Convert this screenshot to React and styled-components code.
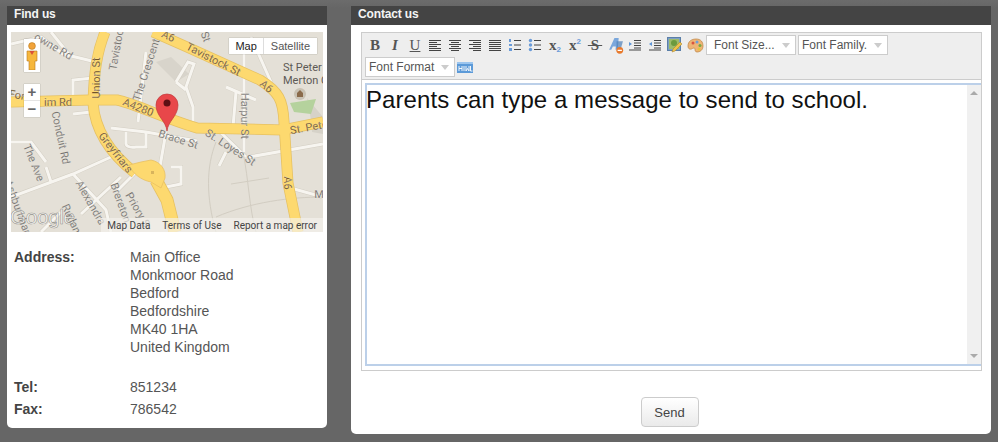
import React from 'react';
import styled, { createGlobalStyle } from 'styled-components';

const GlobalStyle = createGlobalStyle`
  html, body {
    margin: 0;
    padding: 0;
    background: #666;
    font-family: "Liberation Sans", Arial, sans-serif;
    color: #444;
  }
`;

const Page = styled.div`
  width: 998px;
  height: 442px;
  box-sizing: border-box;
  padding: 6px 7px 0;
  display: flex;
  gap: 24px;
  align-items: flex-start;
  overflow: hidden;
  background: linear-gradient(#6c6c6c, #666 8px);
`;

const Panel = styled.section`
  width: ${props => props.$width}px;
  height: ${props => props.$height}px;
  background: #fff;
  border-radius: 0 0 5px 5px;
  flex: none;
`;

const PanelTitle = styled.h2`
  margin: 0;
  height: 19px;
  padding-left: ${props => props.$indent}px;
  background: #444;
  color: #f4f4f4;
  font-size: 12px;
  line-height: 17px;
  font-weight: bold;
  letter-spacing: -0.15px;
`;

const FindBody = styled.div`
  padding: 7px 4px 0;
`;

const MapBox = styled.div`
  position: relative;
  width: 312px;
  height: 200px;
  overflow: hidden;
`;

const MapTypes = styled.div`
  position: absolute;
  top: 6px;
  right: 6px;
  display: flex;
  height: 16px;
  background: #fff;
  box-shadow: 0 0 1px rgba(0, 0, 0, 0.4);
  font-size: 11px;
  line-height: 16px;
`;

const MapType = styled.span`
  padding: 0 ${props => props.$active ? '6px' : '7px'};
  color: ${props => props.$active ? '#222' : '#555'};
  border-left: ${props => props.$active ? 'none' : '1px solid #ddd'};
`;

const Pegman = styled.div`
  position: absolute;
  left: 13px;
  top: 7px;
  width: 16px;
  height: 33px;
  background: #fff;
  box-shadow: 0 0 1px rgba(0, 0, 0, 0.4);
  display: flex;
  align-items: center;
  justify-content: center;
`;

const Zoom = styled.div`
  position: absolute;
  left: 13px;
  top: 52px;
  width: 16px;
  height: 33px;
  background: #fff;
  box-shadow: 0 0 1px rgba(0, 0, 0, 0.4);
  display: flex;
  flex-direction: column;
  color: #666;
  font-size: 15px;
  line-height: 16px;
  text-align: center;
  font-weight: bold;
`;

const ZoomStep = styled.span`
  height: 16px;
  & + & {
    border-top: 1px solid #e4e4e4;
  }
`;

const MapFooter = styled.div`
  position: absolute;
  right: 0;
  bottom: 0;
  height: 14px;
  padding: 0 6px 0 6px;
  display: flex;
  gap: 12px;
  background: rgba(245, 243, 238, 0.65);
  color: #444;
  font-family: Roboto, "Liberation Sans", sans-serif;
  font-size: 10px;
  line-height: 16px;
  white-space: nowrap;
`;

const Details = styled.div`
  margin-top: 16px;
  padding-left: 3px;
  font-size: 14px;
  line-height: 18px;
`;

const DetailRow = styled.div`
  display: flex;
  margin-bottom: ${props => props.$gap || 0}px;
`;

const DetailLabel = styled.div`
  width: 116px;
  font-weight: bold;
  font-size: 14px;
`;

const DetailValue = styled.div`
  white-space: pre-line;
  color: #555;
`;

const ContactBody = styled.div`
  padding: 7px 9px 0 10px;
`;

const Toolbar = styled.div`
  box-sizing: border-box;
  height: 48px;
  padding: 1px 3px 0;
  background: #eee;
  border: 1px solid #ccc;
`;

const ToolRow = styled.div`
  display: flex;
  align-items: center;
  height: 22px;
`;

const ToolButton = styled.span`
  width: 20px;
  height: 20px;
  flex: none;
  display: flex;
  align-items: center;
  justify-content: center;
  font-family: "Liberation Serif", serif;
  font-weight: bold;
  color: #555;
  font-size: 15px;
`;

const Italic = styled.span`
  font-style: italic;
`;

const Underlined = styled.span`
  font-weight: normal;
  text-decoration: underline;
`;

const Struck = styled.span`
  text-decoration: line-through;
`;

const Sub = styled.span`
  font-size: 8px;
  color: #6a9bd8;
  font-family: "Liberation Sans", sans-serif;
  position: relative;
  top: ${props => props.$up ? '-4px' : '4px'};
`;

const SelectBox = styled.div`
  box-sizing: border-box;
  width: ${props => props.$width}px;
  height: 20px;
  margin-left: ${props => props.$ml || 0}px;
  padding-left: ${props => props.$pad}px;
  display: flex;
  align-items: center;
  justify-content: space-between;
  background: #fff;
  border: 1px solid #ccc;
  color: #555;
  font-size: 12px;
  flex: none;
`;

const SelectArrow = styled.i`
  width: 0;
  height: 0;
  margin-right: 5px;
  border-left: 4px solid transparent;
  border-right: 4px solid transparent;
  border-top: 5px solid #ccc;
`;

const EditorFrame = styled.div`
  box-sizing: border-box;
  height: 291px;
  padding: 3px 0 4px 3px;
  border: 1px solid #ccc;
  border-top: none;
  background: #fff;
`;

const Editor = styled.div`
  box-sizing: border-box;
  height: 100%;
  display: flex;
  border: 2px solid #bcd0e9;
  border-right: none;
`;

const EditorText = styled.div`
  flex: 1;
  color: #111;
  font-size: 24px;
  line-height: 30px;
  letter-spacing: 0.07px;
  margin-left: -1px;
`;

const ScrollBar = styled.div`
  width: 14px;
  background: #f0f0f0;
  display: flex;
  flex-direction: column;
  justify-content: space-between;
  align-items: center;
  padding: 6px 0;
`;

const ScrollArrow = styled.i`
  width: 0;
  height: 0;
  border-left: 4px solid transparent;
  border-right: 4px solid transparent;
  ${props => props.$up ? 'border-bottom: 4px solid #aaa;' : 'border-top: 4px solid #aaa;'}
`;

const Actions = styled.div`
  display: flex;
  justify-content: center;
  margin-top: 26px;
`;

const SendButton = styled.button`
  box-sizing: border-box;
  width: 58px;
  height: 30px;
  margin-left: -4px;
  border: 1px solid #ccc;
  border-radius: 4px;
  background: linear-gradient(#fff, #eaeaea);
  color: #444;
  font-family: inherit;
  font-size: 13px;
`;

const minorRoads = [
  'M0 12 L30 5 L52 22 L85 30',
  'M62 65 L62 48 L82 46',
  'M62 82 L80 80',
  'M100 96 L135 100 L186 109',
  'M115 100 L115 112 Q116 116 125 115 L135 115 L135 100',
  'M135 20 L127 90',
  'M165 50 L177 30 L183 32 L175 55 L182 75 L182 96',
  'M155 100 L148 140',
  'M165 50 L175 58',
  'M215 55 L245 68',
  'M225 60 L222 95',
  'M233 15 L233 120',
  'M206 97 L235 125',
  'M215 120 L208 134',
  'M238 125 L312 112',
  'M276 155 L312 165',
  'M160 135 L170 135 L170 152 L155 155',
  'M0 165 L62 142 L100 125',
  'M35 135 L40 150',
  'M62 142 L95 178 L100 200',
  'M110 145 L70 182',
  'M50 180 L30 200',
  'M0 110 L20 110 L35 130',
  'M125 140 L105 160',
  'M240 5 L260 50',
  'M40 0 L60 25',
];

const thinPaths = [
  'M205 110 C195 135 195 165 205 200',
  'M232 120 C238 150 238 175 245 200',
  'M205 185 C240 170 280 165 312 165',
  'M220 152 L258 146',
];

const labels = [
  ['owne Rd', 42, 15, 30],
  ['Union St', 86, 46, -90],
  ['Tavistoc', 106, 18, -80],
  ['The Crescent', 136, 38, -72],
  ['A6', 157, 5, 25],
  ['Tavistock St', 202, 28, 27],
  ['A6', 255, 55, 40],
  ['A4280', 127, 76, 22],
  ['Harpur St', 233, 84, 90],
  ['St. Pete', 298, 96, -10],
  ['Brace St', 167, 108, 17],
  ['St. Loyes St', 219, 116, 33],
  ['Greyfriars', 104, 121, 52],
  ['Conduit Rd', 49, 106, 78],
  ['The Ave', 22, 131, 68],
  ['A6', 276, 151, 90],
  ['Alexandra', 79, 171, 60],
  ['Brereton', 109, 171, 70],
  ['Priory S', 126, 178, 60],
  ['Ashburnham', 7, 178, 70],
  ['Rutland', 61, 190, 65],
  ['Fon', 7, 64, 10],
  ['im Rd', 47, 71, 0],
  ['M', 308, 163, 0],
  ['St', 194, 5, 70],
];

const MapDrawing = () => (
  <svg width="312" height="200" viewBox="0 0 312 200">
    <rect width="312" height="200" fill="#e4e0d7" />
    <path d="M145 30 L160 25 L178 42 L165 50Z" fill="#d8d4cb" />
    <path d="M296 66 L300 88 L301 100 L312 102 L312 85Z" fill="#d6d2c8" />
    <path d="M279 71 L305 67 L300 82 L283 80Z" fill="#b5d29d" />
    <g fill="none" stroke="#d3cec3" strokeWidth="4">
      {minorRoads.map((d, i) => <path key={i} d={d} />)}
    </g>
    <g fill="none" stroke="#f7f5f0" strokeWidth="3">
      {minorRoads.map((d, i) => <path key={i} d={d} />)}
    </g>
    <g fill="none" stroke="#d2cdc2" strokeWidth="1">
      {thinPaths.map((d, i) => <path key={i} d={d} />)}
    </g>
    <g fill="none" stroke="#e6c162" strokeWidth="11">
      <path d="M0 70 L79 68 L106 68 C125 72 150 85 186 96 L272 98 L312 90" />
      <path d="M94 0 C86 20 83 40 82 71 C84 100 100 122 124 141" />
      <path d="M142 0 L176 15 L249 48 C268 60 272 68 273 90 L277 151 L287 200" />
      <path d="M145 148 L156 168 L164 200" strokeWidth="13" />
    </g>
    <g fill="none" stroke="#fdd96f" strokeWidth="9.5">
      <path d="M0 70 L79 68 L106 68 C125 72 150 85 186 96 L272 98 L312 90" />
      <path d="M94 0 C86 20 83 40 82 71 C84 100 100 122 124 141" />
      <path d="M142 0 L176 15 L249 48 C268 60 272 68 273 90 L277 151 L287 200" />
      <path d="M145 148 L156 168 L164 200" strokeWidth="11.5" />
    </g>
    <path d="M118 133 L130 130 L140 128 C150 130 155 138 154 146 L150 156 L140 150 C130 148 122 142 118 133Z" fill="#fdd96f" stroke="#e8c062" strokeWidth="0.8" />
    <rect x="140" y="139" width="3" height="3" fill="#d8b45c" />
    <g fontFamily="Roboto, 'Liberation Sans', sans-serif" fontSize="11" textAnchor="middle">
      {labels.map(([text, x, y, rotate], i) => (
        <text key={i} x={x} y={y} transform={`rotate(${rotate} ${x} ${y})`} fill={/^A\d|Union|Greyfriars|Tavistock St|St\. Pete|im Rd|Fon/.test(text) ? '#5b3a0a' : '#5d5a55'} stroke="#fff" strokeOpacity="0.45" strokeWidth="0.4" dominantBaseline="middle">{text}</text>
      ))}
    </g>
    <g fontFamily="Roboto, 'Liberation Sans', sans-serif" fontSize="11" fill="#5d5a55">
      <text x="272" y="39">St Peter</text>
      <text x="272" y="52">Merton C</text>
    </g>
    <circle cx="289" cy="62" r="6" fill="#c9c2b4" />
    <path d="M286 65 V61 L289 58 L292 61 V65Z" fill="#8a6a4a" />
    <text x="-1" y="192" fontFamily="'Liberation Sans', sans-serif" fontSize="21" fill="#fff" fillOpacity="0.7" stroke="#77756f" strokeOpacity="0.75" strokeWidth="0.6" textLength="65">Google</text>
    <path d="M156 100 C155 90 145 85 145 74 A11 11 0 0 1 167 74 C167 85 157 90 156 100Z" fill="#e8474a" stroke="#c1393b" strokeWidth="0.7" transform="translate(0 -1)" />
    <circle cx="156" cy="71" r="3.5" fill="#5c1014" />
  </svg>
);

const PegmanIcon = () => (
  <svg width="12" height="28" viewBox="0 0 12 28">
    <circle cx="6" cy="4" r="3.4" fill="#f2a33a" stroke="#b87a1e" strokeWidth="0.6" />
    <path d="M1 9 H11 V19 H9 V28 H3 V19 H1Z" fill="#f6b73c" stroke="#b87a1e" strokeWidth="0.6" />
    <path d="M3.5 9 H8.5 L6 13Z" fill="#d8503a" />
  </svg>
);

const Lines = ({ rows }) => (
  <svg width="14" height="12" viewBox="0 0 14 12">
    {rows.map(([x1, x2], i) => (
      <line key={i} x1={x1} x2={x2} y1={1.5 + i * 2} y2={1.5 + i * 2} stroke="#444" strokeWidth="1" />
    ))}
  </svg>
);

const NumberList = () => (
  <svg width="14" height="14" viewBox="0 0 14 14">
    <g fill="#6a9bd8">
      <rect x="1" y="1" width="2" height="3" />
      <rect x="1" y="6" width="3" height="2" />
      <rect x="1" y="10" width="3" height="3" />
    </g>
    <path d="M6 2.5 H13 M6 7 H13 M6 11.5 H13" stroke="#444" />
  </svg>
);

const BulletList = () => (
  <svg width="14" height="14" viewBox="0 0 14 14">
    <g fill="#6a9bd8">
      <circle cx="2.5" cy="2.5" r="1.7" />
      <circle cx="2.5" cy="7" r="1.7" />
      <circle cx="2.5" cy="11.5" r="1.7" />
    </g>
    <path d="M6 2.5 H13 M6 7 H13 M6 11.5 H13" stroke="#444" />
  </svg>
);

const RemoveFormat = () => (
  <svg width="17" height="17" viewBox="0 0 16 16">
    <path d="M2 12 L7 1 H11 L10 12 H8 L8.3 9 H5.5 L4 12Z" fill="#7aa7dc" />
    <path d="M9 4 H15 L13 11 H9Z" fill="#4d7fb8" opacity="0.7" />
    <circle cx="12" cy="12.5" r="3.2" fill="#e8792c" />
    <rect x="10" y="12" width="4" height="1.2" fill="#fff" />
  </svg>
);

const Indent = ({ flip }) => (
  <svg width="14" height="12" viewBox="0 0 14 12">
    <path d="M6 1.5 H13 M6 4 H13 M6 6.5 H13 M6 9 H13 M1 11 H13" stroke="#444" />
    <path d={flip ? 'M1 3 L4 1 V5Z' : 'M4 3 L1 1 V5Z'} transform="translate(0 2)" fill="#5d94d6" />
  </svg>
);

const ImageEdit = () => (
  <svg width="16" height="16" viewBox="0 0 16 16">
    <rect x="0.5" y="0.5" width="13" height="13" fill="#7d9fc4" stroke="#5b7fa8" />
    <rect x="2" y="2" width="10" height="10" fill="#9dbb6a" />
    <circle cx="7" cy="6" r="3" fill="#6c9a3e" />
    <path d="M5 15 L6 12 L13 5 L15 7 L8 14Z" fill="#eec24c" stroke="#a87d22" strokeWidth="0.5" />
  </svg>
);

const Palette = () => (
  <svg width="17" height="15" viewBox="0 0 17 15">
    <path d="M1 8 C1 3 5 1 9 1 C14 1 16 4 16 8 C16 12 13 14 10 14 C8 14 8 12 8 11 C8 9.5 6 10 4.5 11 C3 11.5 1 11 1 8Z" fill="#eeb576" stroke="#bc8240" strokeWidth="0.7" />
    <circle cx="6" cy="5" r="1.5" fill="#d9553f" />
    <circle cx="10" cy="4" r="1.5" fill="#6d9ed8" />
    <circle cx="13" cy="7.5" r="1.5" fill="#77a943" />
    <circle cx="12" cy="11" r="1.5" fill="#e6c53b" />
  </svg>
);

const HtmlIcon = () => (
  <svg width="16" height="11" viewBox="0 0 16 11">
    <rect width="16" height="11" fill="#5c9ad8" />
    <rect y="0" width="16" height="2" fill="#9cc5ee" />
    <path d="M2 4 V9 M5 4 V9 M2 6.5 H5 M7 4 V9 M9 4 V9 L10.5 6.5 L12 9 V4 M13.5 4 V9 H15.5" stroke="#fff" strokeWidth="0.9" fill="none" />
  </svg>
);

const App = () => (
  <Page>
    <GlobalStyle />
    <Panel $width={320} $height={422}>
      <PanelTitle $indent={7}>Find us</PanelTitle>
      <FindBody>
        <MapBox>
          <MapDrawing />
          <Pegman><PegmanIcon /></Pegman>
          <Zoom>
            <ZoomStep>+</ZoomStep>
            <ZoomStep>−</ZoomStep>
          </Zoom>
          <MapTypes>
            <MapType $active>Map</MapType>
            <MapType>Satellite</MapType>
          </MapTypes>
          <MapFooter>
            <span>Map Data</span>
            <span>Terms of Use</span>
            <span>Report a map error</span>
          </MapFooter>
        </MapBox>
        <Details>
          <DetailRow $gap={22}>
            <DetailLabel>Address:</DetailLabel>
            <DetailValue>{'Main Office\nMonkmoor Road\nBedford\nBedfordshire\nMK40 1HA\nUnited Kingdom'}</DetailValue>
          </DetailRow>
          <DetailRow $gap={4}>
            <DetailLabel>Tel:</DetailLabel>
            <DetailValue>851234</DetailValue>
          </DetailRow>
          <DetailRow>
            <DetailLabel>Fax:</DetailLabel>
            <DetailValue>786542</DetailValue>
          </DetailRow>
        </Details>
      </FindBody>
    </Panel>
    <Panel $width={640} $height={428}>
      <PanelTitle $indent={7}>Contact us</PanelTitle>
      <ContactBody>
        <Toolbar>
          <ToolRow>
            <ToolButton>B</ToolButton>
            <ToolButton><Italic>I</Italic></ToolButton>
            <ToolButton><Underlined>U</Underlined></ToolButton>
            <ToolButton><Lines rows={[[1, 13], [1, 9], [1, 13], [1, 9], [1, 13], [1, 13]]} /></ToolButton>
            <ToolButton><Lines rows={[[1, 13], [3, 11], [1, 13], [3, 11], [1, 13], [3, 11]]} /></ToolButton>
            <ToolButton><Lines rows={[[1, 13], [5, 13], [1, 13], [5, 13], [1, 13], [5, 13]]} /></ToolButton>
            <ToolButton><Lines rows={[[1, 13], [1, 13], [1, 13], [1, 13], [1, 13], [1, 13]]} /></ToolButton>
            <ToolButton><NumberList /></ToolButton>
            <ToolButton><BulletList /></ToolButton>
            <ToolButton>x<Sub>2</Sub></ToolButton>
            <ToolButton>x<Sub $up>2</Sub></ToolButton>
            <ToolButton><Struck>{'\u2009S\u2009'}</Struck></ToolButton>
            <ToolButton><RemoveFormat /></ToolButton>
            <ToolButton><Indent /></ToolButton>
            <ToolButton><Indent flip /></ToolButton>
            <ToolButton><ImageEdit /></ToolButton>
            <ToolButton><Palette /></ToolButton>
            <SelectBox $width={90} $ml={1} $pad={7}>Font Size...<SelectArrow /></SelectBox>
            <SelectBox $width={90} $ml={2} $pad={3}>Font Family.<SelectArrow /></SelectBox>
          </ToolRow>
          <ToolRow>
            <SelectBox $width={90} $pad={3}>Font Format<SelectArrow /></SelectBox>
            <ToolButton><HtmlIcon /></ToolButton>
          </ToolRow>
        </Toolbar>
        <EditorFrame>
          <Editor>
            <EditorText>Parents can type a message to send to school.</EditorText>
            <ScrollBar>
              <ScrollArrow $up />
              <ScrollArrow />
            </ScrollBar>
          </Editor>
        </EditorFrame>
        <Actions>
          <SendButton>Send</SendButton>
        </Actions>
      </ContactBody>
    </Panel>
  </Page>
);

export default App;
